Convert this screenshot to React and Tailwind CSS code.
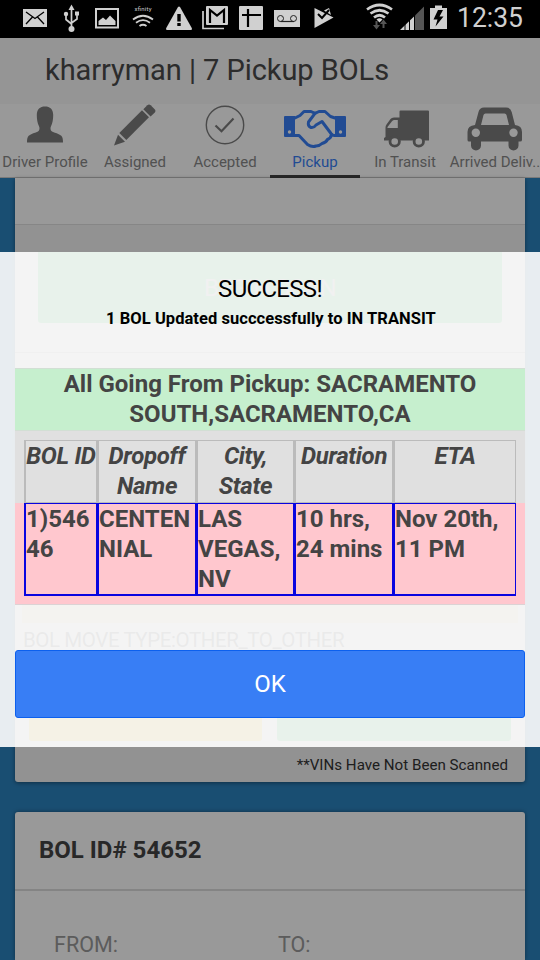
import React from 'react';

const DriverIcon = () => (
  <svg width="36" height="37" viewBox="0 0 36 37" fill="currentColor">
    <path d="M18 0.5c5 0 8.200 2.600 8.200 8.500 0 4-.6 8.500-2.200 11.200-.8 1.300-.8 4.300 1 5.200 2.500 1.200 7 2.200 9.300 4.300 1.400 1.500 1.700 3.600 1.700 6.800H0c0-3.200.3-5.300 1.700-6.800 2.300-2.100 6.800-3.100 9.300-4.300 1.800-.9 1.800-3.900 1-5.200-1.600-2.700-2.200-7.200-2.200-11.200C9.800 3.100 13 .5 18 .5z" />
  </svg>
);

const PencilIcon = () => (
  <svg width="42" height="42" viewBox="0 0 42 42" fill="currentColor">
    <path d="M0 41.500 4 30.800 11 37.800z" />
    <path d="M5.300 29 28 6.300 35 13.300 12.300 36z" />
    <path d="M29.300 5.200 33.300 1.200Q35 -.2 36.700 1.200L40.900 5.500Q42 7 40.800 8.600L36.600 12.500z" />
  </svg>
);

const CheckCircleIcon = () => (
  <svg width="40" height="40" viewBox="0 0 40 40" fill="none" stroke="currentColor">
    <circle cx="20" cy="20" r="18.700" strokeWidth="1.400" />
    <path d="M10.500 20.500 16.500 26.300 28.500 13.500" strokeWidth="2.200" />
  </svg>
);

const HandshakeIcon = () => (
  <svg width="62" height="40" viewBox="0 0 62 40" fill="none" stroke="currentColor" strokeWidth="3" strokeLinejoin="round" strokeLinecap="round">
    <path fill="currentColor" stroke="none" d="M1 7H11V28H1Q0 28 0 27V8Q0 7 1 7z" />
    <path fill="currentColor" stroke="none" d="M61 7H51V28H61Q62 28 62 27V8Q62 7 61 7z" />
    <circle cx="5.500" cy="23" r="1.700" fill="#fff" stroke="none" />
    <circle cx="56.500" cy="23" r="1.700" fill="#fff" stroke="none" />
    <path d="M11 9 16 6.500 20 2.500H27L31 4.300 35 2.500H41L46.500 7.500 51 9" />
    <path d="M31 4.300 24.500 13Q23.500 17 27 18.500Q30 19 32 16L38 12.500 47 24.500Q49 27 51 26.500" />
    <path d="M11 26.500H15L23.500 35.500Q28 38.500 32 37 35.500 37 38 34.500 42 33.500 43.500 30.500 47 29 47.500 25.500" />
  </svg>
);

const TruckIcon = () => (
  <svg width="46" height="38" viewBox="0 0 46 38" fill="currentColor">
    <path fillRule="evenodd" d="M16.500 1.500Q16.500 .5 17.500 .5H45Q46 .5 46 1.500V30.500H1V28L2.500 27V17.500Q2.500 16 3.500 14.500L7.500 9Q8.500 7.500 11 7.500H16.500zM14.800 10H11.500Q10 10 9 11.200L4.500 17V18H14.800z" />
    <circle cx="11.700" cy="31.500" r="4.700" fill="#fff" stroke="currentColor" strokeWidth="2.800" />
    <circle cx="35.800" cy="31.500" r="4.700" fill="#fff" stroke="currentColor" strokeWidth="2.800" />
  </svg>
);

const CarIcon = () => (
  <svg width="56" height="44" viewBox="0 0 56 44" fill="currentColor">
    <path fillRule="evenodd" d="M17 .5H39Q43.500 .5 44.700 5L48 18Q55 18.500 55 25V33Q55 34.500 53 34.500H51.500V38.500A5 5 0 0 1 41.500 38.500V34.500H14V38.500A5 5 0 0 1 4 38.500V34.500H2Q.5 34.500 .5 33V25Q.5 18.500 8 18L11.500 5Q12.500 .5 17 .5zM18.500 6.500Q17 6.500 16.500 8L14 18H42L39.500 8Q39 6.500 37.500 6.500z" />
    <circle cx="8.800" cy="25.800" r="4.200" fill="#fff" />
    <circle cx="46.500" cy="25.800" r="4.200" fill="#fff" />
  </svg>
);

const StatusBar = () => (
  <svg className="block h-[38px] w-[540px] bg-black" viewBox="0 0 540 38" fill="none">
    <g fill="#d0d0d0">
      <rect x="23" y="9" width="24" height="18" />
      <path d="M26 12 35 18.500 44 12M26 24 32.500 17M44 24 37.500 17" fill="none" stroke="#000" strokeWidth="1.300" />
      <path d="M71.500 4.500 74.500 10H68.500z" />
      <circle cx="71.500" cy="29" r="3" />
      <rect x="75" y="11.500" width="4" height="4" />
      <circle cx="66" cy="14" r="2.200" />
      <path d="M71.500 8V28M66 15V19.500L71.500 24M77 14V19L71.500 23" fill="none" stroke="#d0d0d0" strokeWidth="1.700" />
      <rect x="96" y="9" width="22" height="18.500" fill="none" stroke="#d0d0d0" strokeWidth="2" />
      <path d="M98.500 25V21L103 17.500 106 20 110 15.500 115.500 21V25z" />
      <path d="M133 19.500Q143 12 153 19.500M136 22.800Q143 17.500 150 22.800M139.500 26Q143 23.500 146.500 26" fill="none" stroke="#d0d0d0" strokeWidth="1.800" />
      <path d="M178 7Q179 6 180 7L192 28.500Q192 30 191 30H167Q166 30 166 28.500z" />
      <path d="M177.300 14H180.700V21.500H177.300zM177.300 23H180.700V26H177.300z" fill="#000" />
      <path d="M203 11V28.500H224" fill="none" stroke="#d0d0d0" strokeWidth="1.700" />
      <rect x="206" y="6" width="22" height="19" rx="1" />
      <path d="M210 23V10L217 15.500 224 10V23" fill="none" stroke="#000" strokeWidth="2.200" />
      <rect x="239" y="6" width="24" height="24" rx="1" />
      <path d="M242 15H261M248 9V27" fill="none" stroke="#000" strokeWidth="2.200" />
      <rect x="274" y="10" width="26" height="17" />
      <path d="M280.500 21.500H294" stroke="#222" strokeWidth="1.200" />
      <circle cx="280.500" cy="18.500" r="3" stroke="#222" fill="none" />
      <circle cx="293.500" cy="18.500" r="3" stroke="#222" fill="none" />
      <path d="M314.500 8 333.500 17.500 314.500 28z" />
      <path d="M329 8 324 10.500 331 15z" />
      <path d="M318 14 322 18 329 10" fill="none" stroke="#000" strokeWidth="2" />
      <path d="M367 9.500Q379.500 .5 392 9.500M370.500 13.500Q379.500 7 388.500 13.500M374 17.500Q379.500 13 385 17.500" fill="none" stroke="#d0d0d0" strokeWidth="2.700" />
      <path d="M376.500 19.500Q379.500 17 382.500 19.500L379.500 22.500z" />
      <path d="M376.500 21V26M383.500 28V23" stroke="#555" strokeWidth="2" />
      <path d="M373 25H380L376.500 29.500zM380 24H387L383.500 19.500z" fill="#555" />
      <path d="M424 6.500V30H415V15.500z" fill="#555" />
      <path d="M414 16.500V30H400z" />
      <path d="M405 22V30M409.500 18V30M414.500 14V30" stroke="#000" strokeWidth="1" />
      <path d="M430 8H435V5.500H442V8H447V29H430z" />
      <path d="M438 10 433.500 19.500H437.500L435.500 26.500 443.500 16.500H439.500L443 10z" fill="#000" />
    </g>
    <text x="134.500" y="11" fill="#ccc" fontSize="6" textLength="17" className="font-[Roboto,sans-serif]">xfinity</text>
    <text x="457" y="27" fill="#d0d0d0" fontSize="27" textLength="66" lengthAdjust="spacingAndGlyphs" className="font-[Roboto,sans-serif]">12:35</text>
  </svg>
);

const tabs = [
  { label: 'Driver Profile', icon: DriverIcon, pad: 'pt-[2px]' },
  { label: 'Assigned', icon: PencilIcon, pad: 'pt-0' },
  { label: 'Accepted', icon: CheckCircleIcon, pad: 'pt-px' },
  { label: 'Pickup', icon: HandshakeIcon, active: true, pad: 'pt-[5px]' },
  { label: 'In Transit', icon: TruckIcon, pad: 'pt-[6px] pl-px' },
  { label: 'Arrived Deliv..', icon: CarIcon, pad: 'pt-[3px]' },
];

const TabItem = ({ label, icon: Icon, active, pad }) => (
  <div
    className={`flex h-[74px] w-[90px] flex-none flex-col items-center border-b-[3px] ${
      active ? 'border-[#444] text-[#387ef5]' : 'border-transparent'
    }`}
  >
    <div className={`flex h-[49px] items-start ${pad} ${active ? '' : 'text-[#7c7c7c]'}`}>
      <Icon />
    </div>
    <span className={`text-[15px] leading-[18px] whitespace-nowrap ${active ? '' : 'text-[#888]'}`}>{label}</span>
  </div>
);

const headers = ['BOL ID', 'Dropoff Name', 'City, State', 'Duration', 'ETA'];
const row = ['1)546 46', 'CENTEN NIAL', 'LAS VEGAS, NV', '10 hrs, 24 mins', 'Nov 20th, 11 PM'];
const columns = 'grid grid-cols-[73px_99px_98px_99px_123px] pl-[9px]';

const PickupTable = () => (
  <div className="mx-[15px] h-[237px] text-2xl leading-[30px] font-bold text-[#444]">
    <div className="h-[63px] border-y border-[#d2dfd4] bg-[#c6efce] text-center">
      All Going From Pickup: SACRAMENTO SOUTH,SACRAMENTO,CA
    </div>
    <div className={`${columns} h-[72px] bg-[#e0e0e0] pt-[9px]`}>
      {headers.map((h) => (
        <div key={h} className="h-[63px] border border-l-2 border-[#bbb] text-center tracking-[-0.35px] italic">
          <span className={h === 'BOL ID' ? 'whitespace-nowrap' : 'block px-0.5'}>{h}</span>
        </div>
      ))}
    </div>
    <div className={`${columns} h-[102px] border-b border-[#dcd2d4] bg-[#ffc7ce]`}>
      {row.map((cell) => (
        <div key={cell} className="h-[93px] border border-b-2 border-l-2 border-[#0a04e0]">
          {cell}
        </div>
      ))}
    </div>
  </div>
);

const SuccessPopup = () => (
  <div className="absolute top-[252px] left-0 flex h-[495px] w-full flex-col bg-white/90">
    <div className="h-[116px] pt-[22px] text-center text-black">
      <h3 className="text-2xl leading-[30px] tracking-[-0.7px]">SUCCESS!</h3>
      <h5 className="pt-[4px] pl-[2px] text-[16.5px] leading-[22px] font-bold tracking-[0.05px]">
        1 BOL Updated succcessfully to IN TRANSIT
      </h5>
    </div>
    <PickupTable />
    <button className="mx-[15px] mt-[45px] h-[68px] rounded-[3px] border border-[#0c60ee] bg-[#387ef5] text-2xl text-white">
      OK
    </button>
  </div>
);

export default function App() {
  return (
    <div className="relative flex h-[960px] w-[540px] flex-col overflow-hidden bg-[#2b82be] font-[Roboto,sans-serif]">
      <StatusBar />
      <header className="h-[66px] flex-none bg-[#f8f8f8] pl-[45px] text-[29px] leading-[64px] tracking-[-0.06px] text-[#4a4a4a]">
        kharryman | 7 Pickup BOLs
      </header>
      <nav className="flex h-[74px] flex-none border-b border-[#ccc] bg-white">
        {tabs.map((tab) => (
          <TabItem key={tab.label} {...tab} />
        ))}
      </nav>

      <main className="flex flex-1 flex-col gap-[30px] px-[15px]">
        <section className="flex h-[604px] flex-none flex-col rounded-b-[3px] bg-[#f4f4f4] shadow-[0_1px_4px_rgba(0,0,0,0.4)]">
          <div className="h-[47px] border-b border-[#e0e0e0] bg-white" />
          <div className="h-[128px] border-b border-[#aaa] px-[23px] pt-[27px]">
            <div className="h-[71px] rounded-b-[3px] bg-[#33cd5f] text-center text-2xl leading-[72px] tracking-[-0.5px] text-[#bbb]">
              BEGIN SCAN
            </div>
          </div>
          <div className="mx-[7px] mt-[240px] h-[30px] bg-[#eee8b0]" />
          <div className="h-[37px] pl-2 text-[20.5px] leading-[35px] tracking-[-0.42px] text-[#444]">
            BOL MOVE TYPE:OTHER_TO_OTHER
          </div>
          <div className="flex gap-[15px] pr-[14px] pl-[14px]">
            <div className="h-[81px] w-[233px] rounded-[3px] bg-[#ffc900]" />
            <div className="h-[81px] w-[234px] rounded-[3px] bg-[#33cd5f]" />
          </div>
          <div className="pt-[15px] pr-[17px] text-right text-[15.15px] leading-[18px] text-[#333]">
            **VINs Have Not Been Scanned
          </div>
        </section>

        <section className="flex-1 rounded-t-[3px] bg-white shadow-[0_0_4px_rgba(0,0,0,0.4)]">
          <h2 className="h-[79px] border-b-2 border-[#ddd] pl-6 text-2xl leading-[76px] font-bold text-[#444]">
            BOL ID# 54652
          </h2>
          <div className="flex pt-[40px] pl-[39px] text-[21.5px] leading-[28px] text-[#999]">
            <span className="w-[224px]">FROM:</span>
            <span>TO:</span>
          </div>
        </section>
      </main>

      {/* backdrop */}
      <div className="absolute inset-0 mt-[38px] bg-black/40" />
      <SuccessPopup />
    </div>
  );
}
